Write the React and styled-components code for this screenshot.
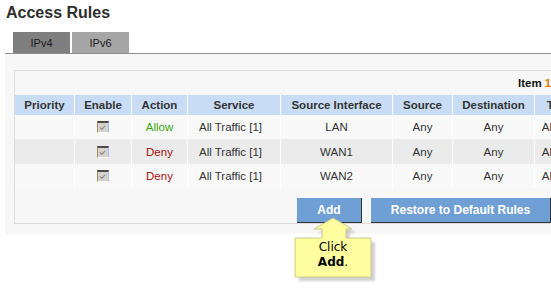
import React from "react";
import styled, { createGlobalStyle } from "styled-components";

const GlobalStyle = createGlobalStyle`
  html, body {
    margin: 0;
    padding: 0;
    background: #ffffff;
    overflow: hidden;
  }
  body {
    font-family: "Liberation Sans", Arial, sans-serif;
    color: #333333;
  }
`;

const Page = styled.div`
  position: relative;
  width: 760px;
  min-height: 288px;
  padding-top: 3px;
`;

const Title = styled.h1`
  margin: 0 0 0 6px;
  font-size: 16px;
  line-height: 19px;
  font-weight: bold;
  color: #2e2e2e;
`;

const TabBar = styled.div`
  display: flex;
  gap: 2px;
  margin: 10px 0 0 5px;
  padding-left: 8px;
  border-bottom: 1px solid #8c8c8c;
`;

const Tab = styled.div`
  width: 57px;
  height: 21px;
  line-height: 22px;
  text-align: center;
  font-size: 11px;
  color: #1a1a1a;
  background: ${(p) => (p.active ? "#7f7f7f" : "#a6a6a6")};
`;

const Panel = styled.div`
  margin-left: 5px;
  padding: 16px 0 10px 9px;
  background: #f7f7f7;
`;

const InnerBox = styled.div`
  width: max-content;
  border: 1px solid #dcdcdc;
`;

const ItemBar = styled.div`
  height: 24px;
  line-height: 24px;
  padding-left: 503px;
  font-size: 11.5px;
  font-weight: bold;
  color: #111;
`;

const Num = styled.span`
  color: #e07b00;
`;

const Table = styled.table`
  border-collapse: collapse;
  font-size: 11.5px;
  td + td,
  th + th {
    border-left: 1px solid #ffffff;
  }
`;

const Th = styled.th`
  width: ${(p) => p.w}px;
  height: 20px;
  padding: 0;
  background: #c8ddf5;
  font-weight: bold;
  color: #333;
  text-align: center;
  white-space: nowrap;
`;

const Row = styled.tr`
  height: ${(p) => p.h}px;
  background: ${(p) => (p.alt ? "#ebebeb" : "#f9f9f9")};
`;

const Td = styled.td`
  padding: 0;
  text-align: ${(p) => (p.left ? "left" : "center")};
  padding-left: ${(p) => (p.left ? "11px" : "0")};
  white-space: nowrap;
  color: ${(p) => p.color || "#333333"};
`;

const Check = styled.span`
  display: inline-block;
  vertical-align: middle;
  box-sizing: border-box;
  width: 12px;
  height: 12px;
  background: #d6d3ce;
  border-top: 2px solid #4a4a4a;
  border-left: 1px solid #b08a50;
  border-right: 1px solid #9fc3f0;
  border-bottom: 1px solid #ffffff;
  svg {
    display: block;
  }
`;

const ButtonRow = styled.div`
  display: flex;
  gap: 9px;
  margin-top: 10px;
  padding-left: 282px;
`;

const Button = styled.div`
  box-sizing: border-box;
  width: ${(p) => p.w}px;
  height: 25px;
  line-height: 24px;
  text-align: center;
  background: #6f9fd5;
  color: #ffffff;
  font-size: 12px;
  font-weight: bold;
  border-right: 1px solid #333;
  border-bottom: 1px solid #333;
`;

const Callout = styled.div`
  position: absolute;
  left: 290px;
  top: 215px;
  width: 90px;
  height: 70px;
  svg {
    position: absolute;
    left: 0;
    top: 0;
  }
`;

const CalloutText = styled.div`
  position: relative;
  width: 86px;
  padding-top: 25px;
  text-align: center;
  font-family: "DejaVu Sans", Verdana, sans-serif;
  font-size: 12px;
  line-height: 15px;
  color: #000;
  b {
    font-weight: bold;
  }
`;

const columns = [
  ["Priority", 59],
  ["Enable", 56],
  ["Action", 55],
  ["Service", 92],
  ["Source Interface", 111],
  ["Source", 59],
  ["Destination", 81],
  ["Time", 50],
  ["Day", 50],
  ["Delete", 50],
];

const rules = [
  { action: "Allow", iface: "LAN", h: 24 },
  { action: "Deny", iface: "WAN1", h: 25, alt: true },
  { action: "Deny", iface: "WAN2", h: 24 },
];

const arrowPath =
  "M43 3 L62 14 L56 14 L56 23 L81 23 L81 62 L5 62 L5 23 L32 23 L32 14 L24 14 Z";

export default function App() {
  return (
    <Page>
      <GlobalStyle />
      <Title>Access Rules</Title>
      <TabBar>
        <Tab active>IPv4</Tab>
        <Tab>IPv6</Tab>
      </TabBar>
      <Panel>
        <InnerBox>
          <ItemBar>
            Item <Num>1</Num>-3 of 3
          </ItemBar>
          <Table>
            <thead>
              <tr>
                {columns.map(([name, w]) => (
                  <Th key={name} w={w}>
                    {name}
                  </Th>
                ))}
              </tr>
            </thead>
            <tbody>
              {rules.map((r) => (
                <Row key={r.iface} h={r.h} alt={r.alt}>
                  <Td></Td>
                  <Td>
                    <Check>
                      <svg width="9" height="9" viewBox="0 0 9 9">
                        <path d="M2 4.5 L3.8 6.3 L7 2.8" fill="none" stroke="#8a8a8a" strokeWidth="1.2" />
                      </svg>
                    </Check>
                  </Td>
                  <Td color={r.action === "Allow" ? "#3aa60e" : "#a31010"}>{r.action}</Td>
                  <Td left>All Traffic [1]</Td>
                  <Td>{r.iface}</Td>
                  <Td>Any</Td>
                  <Td>Any</Td>
                  <Td>Always</Td>
                  <Td></Td>
                  <Td></Td>
                </Row>
              ))}
            </tbody>
          </Table>
          <ButtonRow>
            <Button w={65}>Add</Button>
            <Button w={180}>Restore to Default Rules</Button>
          </ButtonRow>
        </InnerBox>
      </Panel>
      <Callout>
        <svg width="90" height="70" viewBox="0 0 90 70">
          <defs>
            <filter id="blur" x="-20%" y="-20%" width="140%" height="140%">
              <feGaussianBlur stdDeviation="1.2" />
            </filter>
          </defs>
          <path d={arrowPath} transform="translate(4 4)" fill="rgba(0,0,0,0.18)" filter="url(#blur)" />
          <path d={arrowPath} fill="#ffffa0" stroke="#c9c98f" strokeWidth="1" />
        </svg>
        <CalloutText>
          Click
          <br />
          <b>Add</b>.
        </CalloutText>
      </Callout>
    </Page>
  );
}
